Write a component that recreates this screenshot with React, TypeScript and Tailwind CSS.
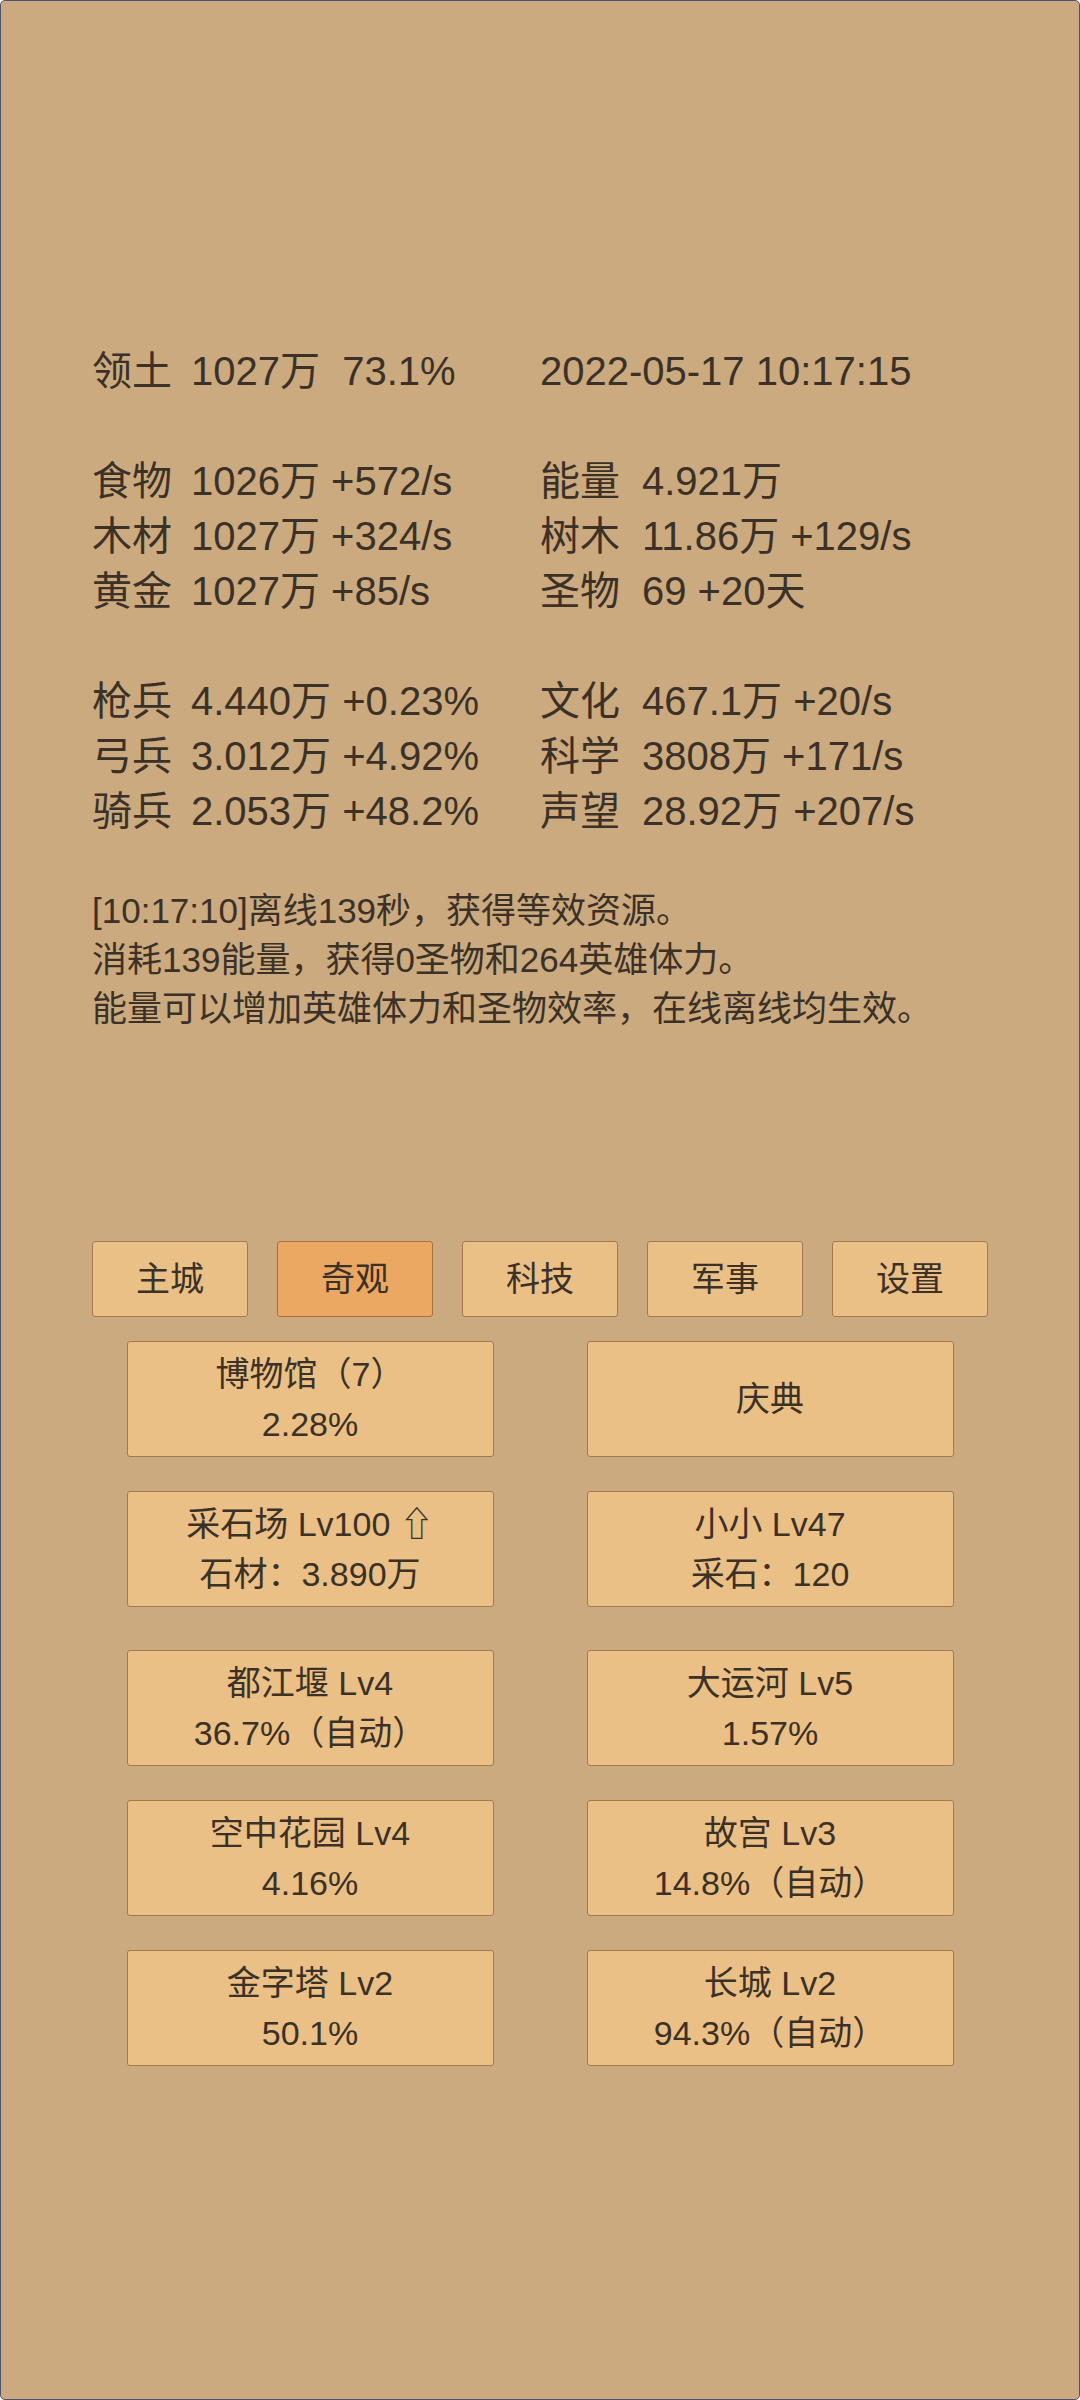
const font = {
  fontFamily: '"Liberation Sans", "Noto Sans CJK SC", "DejaVu Sans", sans-serif',
}

type Stat = { label: string; value: string }

const statGroups: [Stat, Stat][][] = [
  [[{ label: '领土', value: '1027万\u00a0\u00a073.1%' }, { label: '', value: '2022-05-17 10:17:15' }]],
  [
    [{ label: '食物', value: '1026万 +572/s' }, { label: '能量', value: '4.921万' }],
    [{ label: '木材', value: '1027万 +324/s' }, { label: '树木', value: '11.86万 +129/s' }],
    [{ label: '黄金', value: '1027万 +85/s' }, { label: '圣物', value: '69 +20天' }],
  ],
  [
    [{ label: '枪兵', value: '4.440万 +0.23%' }, { label: '文化', value: '467.1万 +20/s' }],
    [{ label: '弓兵', value: '3.012万 +4.92%' }, { label: '科学', value: '3808万 +171/s' }],
    [{ label: '骑兵', value: '2.053万 +48.2%' }, { label: '声望', value: '28.92万 +207/s' }],
  ],
]

const tabs = ['主城', '奇观', '科技', '军事', '设置']

const topCards = [
  ['博物馆（7）', '2.28%'],
  ['庆典'],
  ['采石场 Lv100 ⇧', '石材：3.890万'],
  ['小小 Lv47', '采石：120'],
]

const wonders = [
  ['都江堰 Lv4', '36.7%（自动）'],
  ['大运河 Lv5', '1.57%'],
  ['空中花园 Lv4', '4.16%'],
  ['故宫 Lv3', '14.8%（自动）'],
  ['金字塔 Lv2', '50.1%'],
  ['长城 Lv2', '94.3%（自动）'],
]

function StatCell({ stat, right }: { stat: Stat; right?: boolean }) {
  return (
    <div className="whitespace-pre">
      {stat.label && (
        <span className={right ? 'inline-block w-[102px]' : 'inline-block w-[99px]'}>{stat.label}</span>
      )}
      <span>{stat.value}</span>
    </div>
  )
}

function Card({ lines }: { lines: string[] }) {
  return (
    <div className="h-[116px] w-[367px] flex flex-col items-center justify-center rounded-[3px] border border-[#a47a4c] bg-[#eac086] text-[34px] leading-[50px]">
      {lines.map((l) => (
        <div key={l} className="whitespace-pre">{l}</div>
      ))}
    </div>
  )
}

export default function App() {
  return (
    <div
      style={font}
      className="w-[1080px] h-[2400px] overflow-hidden rounded-[5px] border border-[#4f5472] bg-[#cbaa80] text-[#3b3127]"
    >
      <div className="pt-[343px] pl-[91px] text-[40px] leading-[55px]">
        {statGroups.map((group, gi) => (
          <div key={gi} className={gi > 0 ? 'mt-[55px]' : ''}>
            {group.map((row, ri) => (
              <div key={ri} className="flex">
                <div className="w-[448px]">
                  <StatCell stat={row[0]} />
                </div>
                <StatCell stat={row[1]} right />
              </div>
            ))}
          </div>
        ))}
      </div>

      <div className="mt-[47px] pl-[91px] text-[35px] leading-[49px]">
        <div>[10:17:10]离线139秒，获得等效资源。</div>
        <div>消耗139能量，获得0圣物和264英雄体力。</div>
        <div>能量可以增加英雄体力和圣物效率，在线离线均生效。</div>
      </div>

      <div className="mt-[208px] flex justify-center gap-[29px]">
        {tabs.map((t) => (
          <div
            key={t}
            className={
              'h-[76px] w-[156px] flex items-center justify-center rounded-[3px] border text-[34px] ' +
              (t === '奇观' ? 'bg-[#eba862] border-[#a8703e]' : 'bg-[#eac086] border-[#a47a4c]')
            }
          >
            {t}
          </div>
        ))}
      </div>

      <div className="mt-[24px] grid grid-cols-[367px_367px] justify-center gap-x-[93px] gap-y-[34px]">
        {topCards.map((c) => (
          <Card key={c[0]} lines={c} />
        ))}
      </div>

      <div className="mt-[43px] grid grid-cols-[367px_367px] justify-center gap-x-[93px] gap-y-[34px]">
        {wonders.map((c) => (
          <Card key={c[0]} lines={c} />
        ))}
      </div>
    </div>
  )
}
